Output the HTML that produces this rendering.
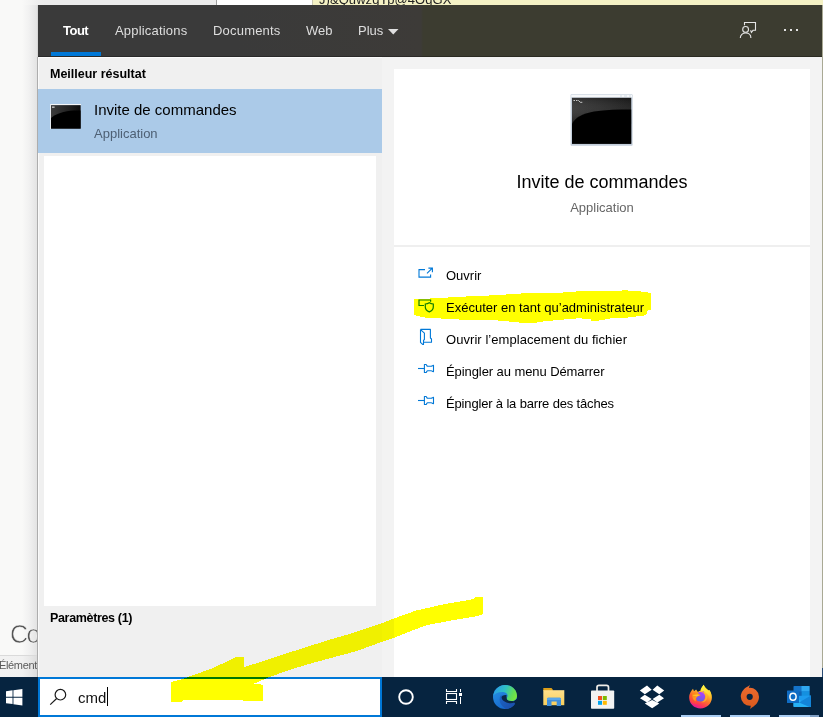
<!DOCTYPE html>
<html lang="fr">
<head>
<meta charset="utf-8">
<title>Recherche Windows - cmd</title>
<style>
*{box-sizing:border-box;margin:0;padding:0}
html,body{width:823px;height:717px;overflow:hidden;background:#f9f9f8}
body{position:relative;font-family:"Liberation Sans",sans-serif;font-size:13px;color:#000}
.abs{position:absolute}
/* background behind panel */
#bgtop{left:0;top:0;width:823px;height:6px;background:linear-gradient(90deg,#f9f9f8 0,#f9f9f8 22px,#efefef 36px,#ececec 44px,#ececec 216px)}
#bgtop .w{left:216px;top:0;width:96px;height:6px;background:#fff;border-left:1px solid #a0a0a0}
#bgtop .y{left:312px;top:0;width:511px;border-left:1px solid #c9c7b0;height:6px;background:#f4f1c4;overflow:hidden}
#bgtop .y span{position:absolute;left:6px;top:-8px;font-size:13px;line-height:15px;color:#222;letter-spacing:.06px;white-space:nowrap}
#bgleft{left:0;top:5px;width:38px;height:672px;background:linear-gradient(90deg,#f9f9f8 0,#f9f9f8 22px,#f1f1f1 29px,#e5e5e5 36px,#e2e2e2 37px,#efefef 37px,#efefef 38px)}
#co{left:10px;top:620px;font-size:25px;line-height:28px;color:#555;-webkit-text-stroke:.55px #f9f9f8;white-space:nowrap;width:27px;overflow:hidden;letter-spacing:-1.500px}
#elline{left:0;top:655px;width:38px;height:22px;background:linear-gradient(90deg,#f2f2f2 0,#f1f1f1 22px,#e9e9e9 29px,#dedede 36px,#dcdcdc 37px,#e9e9e9 37px,#e9e9e9 38px);border-top:1px solid #dadada}
#el{left:-1px;top:658px;font-size:11px;line-height:14px;color:#5a5a5a;white-space:nowrap;width:39px;overflow:hidden;letter-spacing:-.35px}
/* panel */
#panel{left:38px;top:5px;width:784px;height:672px;background:#f3f3f3}
#hdr{left:0;top:0;width:784px;height:52px;background:linear-gradient(90deg,#3a3a3a 0,#3a3a3a 200px,#3d3b38 383px,#3c3c30 385px,#3c3c30 784px)}
.tab{position:absolute;top:18px;font-size:13px;color:#dedede;white-space:nowrap;line-height:16px}
#tout{left:25px;font-weight:bold;color:#fff;letter-spacing:-.5px}
#uline{left:13px;top:47px;width:50px;height:4px;background:#0078d7}
#leftcol{left:0;top:52px;width:344px;height:620px;background:#f0f0f0}
#best{left:12px;top:9px;font-size:12.5px;font-weight:bold;line-height:16px;white-space:nowrap;color:#000}
#sel{left:0;top:32px;width:344px;height:64px;background:#abcae8}
#sel .t1{left:56px;top:11px;font-size:15px;line-height:20px;white-space:nowrap}
#sel .t2{left:56px;top:37px;font-size:13px;line-height:16px;color:#4e6074;white-space:nowrap}
#whitebox{left:6px;top:99px;width:332px;height:450px;background:#fff}
#params{left:12px;top:553px;letter-spacing:-.34px;font-size:12.5px;font-weight:bold;line-height:16px;white-space:nowrap}
#right{left:356px;top:64px;width:416px;height:608px;background:#fff}
#rtitle{left:0;top:102px;width:416px;text-align:center;font-size:18px;line-height:22px}
#rsub{left:0;top:131px;width:416px;text-align:center;font-size:13px;line-height:16px;color:#666}
#rdiv{left:0;top:176px;width:416px;height:2px;background:#efefef}
.act{position:absolute;left:52px;font-size:13px;line-height:16px;white-space:nowrap;color:#000}
.ico{position:absolute;overflow:visible}
/* taskbar */
#task{left:0;top:677px;width:823px;height:40px;background:#062440}
#sbox{left:38px;top:0;width:344px;height:40px;background:#fff;border:2px solid #0078d7}
#sbox .q{left:38px;top:9px;font-size:15px;line-height:20px;color:#111}
#caret{left:67px;top:8px;width:1px;height:19px;background:#000}
#hl{left:0;top:0;width:823px;height:717px;mix-blend-mode:multiply;pointer-events:none}
</style>
</head>
<body>
<div id="bgtop" class="abs"><div class="w abs"></div><div class="y abs"><span>J)&amp;QuwzgYp@4OqGX</span></div></div>
<div id="bgleft" class="abs"></div>
<div id="co" class="abs">Co</div>
<div id="elline" class="abs"></div>
<div id="el" class="abs">Élément</div>

<div class="abs" style="left:822px;top:5px;width:1px;height:663px;background:#a9a994"></div>
<div class="abs" style="left:822px;top:668px;width:1px;height:9px;background:#2a4c74"></div>
<div class="abs" style="left:37px;top:5px;width:1px;height:52px;background:#d6d6d6"></div>
<div class="abs" style="left:37px;top:57px;width:1px;height:620px;background:#adadad"></div>
<div id="panel" class="abs">
  <div id="hdr" class="abs">
    <div class="tab" id="tout">Tout</div>
    <div class="tab" style="left:77px;letter-spacing:.19px">Applications</div>
    <div class="tab" style="left:175px;letter-spacing:.2px">Documents</div>
    <div class="tab" style="left:268px">Web</div>
    <div class="tab" style="left:320px">Plus</div>
    <svg class="ico" style="left:350px;top:23.500px" width="10.500" height="5.500" viewBox="0 0 11 6" preserveAspectRatio="none"><path d="M0 0h11L5.500 6z" fill="#e0e0e0"/></svg>
    <div id="uline" class="abs"></div>
    <!-- feedback icon -->
    <svg class="ico" style="left:701px;top:16px" width="18" height="18" viewBox="0 0 18 18" fill="none" stroke="#e6e6e6" stroke-width="1.100">
      <path d="M5.500 4.200V1.500H16.500V9.300H14L12.400 11.400 11.600 9.300"/>
      <circle cx="6.600" cy="8.400" r="2.900"/>
      <path d="M1.300 17C1.300 13.800 3.700 12 6.600 12S11.900 13.800 11.900 17"/>
    </svg>
    <div class="abs" style="left:746px;top:24px;width:2px;height:2px;background:#e2e2e2"></div>
    <div class="abs" style="left:752px;top:24px;width:2px;height:2px;background:#e2e2e2"></div>
    <div class="abs" style="left:758px;top:24px;width:2px;height:2px;background:#e2e2e2"></div>
  </div>

  <div class="abs" style="left:0;top:51px;width:784px;height:1px;background:rgba(0,0,0,.28)"></div>
  <div id="leftcol" class="abs">
    <div class="abs" style="left:0;top:0;width:344px;height:1px;background:#fbfbfb"></div>
    <div class="abs" style="left:0;top:0;width:1px;height:620px;background:#fafafa"></div>
    <div id="best" class="abs">Meilleur résultat</div>
    <div id="sel" class="abs">
      <svg class="ico" style="left:12px;top:15px" width="32" height="26" viewBox="0 0 32 26">
        <defs><linearGradient id="g1" x1="0" y1="0" x2="1" y2="0"><stop offset="0" stop-color="#3c3c3c"/><stop offset=".6" stop-color="#222"/><stop offset="1" stop-color="#0c0c0c"/></linearGradient></defs>
        <rect x="0" y="0" width="31" height="25" fill="#7d8fa3"/>
        <rect x="0" y="0" width="31" height="1.200" fill="#f4f6f8"/>
        <rect x="0" y="0" width="1" height="25" fill="#e6ebf0"/>
        <rect x="1" y="1.200" width="29.500" height="23.200" fill="url(#g1)"/>
        <path d="M1 14C5 10.500 11 8 17 7.200 22 6.600 26 6.600 30.500 6.600V24.400H1z" fill="#000"/>
        <rect x="2" y="2.500" width="2.600" height="1.300" fill="#d0d0d0"/>
      </svg>
      <div class="t1 abs">Invite de commandes</div>
      <div class="t2 abs">Application</div>
    </div>
    <div id="whitebox" class="abs"></div>
    <div id="params" class="abs">Paramètres (1)</div>
  </div>

  <div id="right" class="abs">
    <svg class="ico" style="left:176px;top:25px" width="64" height="53" viewBox="0 0 64 53">
      <defs><linearGradient id="g2" x1="0" y1="0" x2="1" y2="0"><stop offset="0" stop-color="#333"/><stop offset=".5" stop-color="#262626"/><stop offset="1" stop-color="#161616"/></linearGradient>
      <linearGradient id="g3" x1="0" y1="0" x2="0" y2="1"><stop offset="0" stop-color="#fff" stop-opacity="0"/><stop offset="1" stop-color="#000" stop-opacity=".35"/></linearGradient></defs>
      <rect x=".6" y=".2" width="62" height="51.600" rx=".8" fill="#c3cedb"/>
      <rect x="1.200" y=".8" width="60.800" height="2.600" fill="#f6f8fa"/>
      <rect x="2" y="3.800" width="59.200" height="46" fill="url(#g2)"/>
      <rect x="2" y="3.800" width="59.200" height="26" fill="url(#g3)"/>
      <path d="M2 30C5 23.500 12 20 24 17.500 36 15.800 48 15.500 61.200 15.500V49.800H2z" fill="#000"/>
      <path d="M3.500 6.500h1.500M6 6.500h1.500M8.300 6.300l2 2h2" stroke="#d8d8d8" stroke-width=".9" fill="none"/>
      <path d="M50 2h2M54 2h3M59 2h2" stroke="#c9d3de" stroke-width=".8"/>
    </svg>
    <div id="rtitle" class="abs">Invite de commandes</div>
    <div id="rsub" class="abs">Application</div>
    <div id="rdiv" class="abs"></div>

    <!-- Ouvrir -->
    <svg class="ico" style="left:23px;top:198px" width="16" height="12" viewBox="0 0 16 12" fill="none" stroke="#0078d7" stroke-width="1.100">
      <path d="M8 2.600H2V10.100H13.600V7.500"/><path d="M10 6.400L15.300 1.100M11.400 1.100H15.400V5.200"/>
    </svg>
    <div class="act" style="top:199px">Ouvrir</div>
    <!-- Executer -->
    <svg class="ico" style="left:23px;top:230px" width="18" height="14" viewBox="0 0 18 14" fill="none" stroke-width="1.200">
      <path d="M7 6.500H2V1H13.600V2.800" stroke="#107c10"/>
      <path d="M12.300 3.800c1.300.9 2.600 1.200 4 1.200v3c0 2.400-1.700 4-4 4.900-2.300-.9-4-2.500-4-4.900V5c1.400 0 2.700-.3 4-1.200z" stroke="#107c10"/>
    </svg>
    <div class="act" style="top:231px">Exécuter en tant qu’administrateur</div>
    <!-- Ouvrir emplacement -->
    <svg class="ico" style="left:25px;top:259px" width="14" height="18" viewBox="0 0 14 18" fill="none" stroke="#0078d7" stroke-width="1.100" stroke-linejoin="round">
      <path d="M1.500 1.400H11.400V10L12.500 11V14.200H4.500"/><path d="M1.500 1.400V14.400L3.600 16.400H4.500V12.400L5.400 11.500V5.100L1.500 1.700"/>
    </svg>
    <div class="act" style="top:263px;letter-spacing:.06px">Ouvrir l’emplacement du fichier</div>
    <!-- pin -->
    <svg class="ico" style="left:24px;top:295px" width="17" height="9" viewBox="0 0 17 9" fill="none" stroke="#0078d7" stroke-width="1.100" stroke-linejoin="round">
      <path d="M0 4.500H6.400"/><path d="M6.400.500H8.200C8.800 1.300 9 2.300 9.600 2.300H13.200C14 2.300 14.400 1.600 15 1.400H15.500V7.600H15C14.400 7.400 14 6.700 13.200 6.700H9.600C9 6.700 8.800 7.700 8.200 8.500H6.400z"/>
    </svg>
    <div class="act" style="top:295px;letter-spacing:-.08px">Épingler au menu Démarrer</div>
    <svg class="ico" style="left:24px;top:327px" width="17" height="9" viewBox="0 0 17 9" fill="none" stroke="#0078d7" stroke-width="1.100" stroke-linejoin="round">
      <path d="M0 4.500H6.400"/><path d="M6.400.500H8.200C8.800 1.300 9 2.300 9.600 2.300H13.200C14 2.300 14.400 1.600 15 1.400H15.500V7.600H15C14.400 7.400 14 6.700 13.200 6.700H9.600C9 6.700 8.800 7.700 8.200 8.500H6.400z"/>
    </svg>
    <div class="act" style="top:327px;letter-spacing:-.16px">Épingler à la barre des tâches</div>
  </div>
</div>

<div id="task" class="abs">
  <!-- windows logo -->
  <svg class="ico" style="left:5.800px;top:11.900px" width="16.400" height="16.500" viewBox="0 0 17 17" preserveAspectRatio="none" fill="#fff">
    <path d="M0 2.300L6.800 1.400V8H0zM7.700 1.300L17 0V8H7.700zM0 8.900H6.800V15.500L0 14.600zM7.700 8.900H17V17L7.700 15.700z"/>
  </svg>
  <div id="sbox" class="abs">
    <svg class="ico" style="left:9px;top:9px" width="18" height="18" viewBox="0 0 18 18" fill="none" stroke="#1a1a1a" stroke-width="1.200">
      <circle cx="11.400" cy="6.700" r="5.300"/><path d="M7.650 10.450L1.200 16.600"/>
    </svg>
    <div class="q abs">cmd</div>
    <div id="caret" class="abs"></div>
  </div>
  <!-- cortana -->
  <svg class="ico" style="left:398px;top:12px" width="16" height="16" viewBox="0 0 16 16" fill="none" stroke="#fff" stroke-width="1.900"><circle cx="8" cy="8" r="6.800"/></svg>
  <!-- task view -->
  <svg class="ico" style="left:445px;top:11px" width="18" height="17" viewBox="0 0 18 17" fill="none" stroke="#fff" stroke-width="1.100">
    <path d="M1.500 1V3.500H11.500V1M1.500 16V13.500H11.500V16"/><rect x="1.500" y="5.500" width="10" height="6"/><path d="M15.500 1V4M15.500 9V16" stroke-width="1"/><rect x="14" y="5" width="3" height="3" fill="#fff" stroke="none"/>
  </svg>
  <!-- edge -->
  <svg class="ico" style="left:493px;top:8px" width="24" height="24" viewBox="0 0 24 24">
    <defs>
      <linearGradient id="e1" x1="0" y1=".3" x2="1" y2=".6"><stop offset="0" stop-color="#2a9ce8"/><stop offset=".45" stop-color="#2fc0c4"/><stop offset=".8" stop-color="#5fdc5c"/><stop offset="1" stop-color="#7ae63c"/></linearGradient>
      <linearGradient id="e2" x1="0" y1="0" x2=".6" y2="1"><stop offset="0" stop-color="#2a98e6"/><stop offset="1" stop-color="#1464cc"/></linearGradient>
      <linearGradient id="e3" x1="0" y1="0" x2="1" y2="1"><stop offset="0" stop-color="#1c66c8"/><stop offset="1" stop-color="#1a4aa6"/></linearGradient>
    </defs>
    <circle cx="12" cy="12" r="12" fill="url(#e2)"/>
    <path d="M7.600 10.500C6 13 6.300 17 8.500 20c1.300 1.800 3 3.200 4.500 4 4.500-.3 8.700-3.300 10-7.600-2 1.300-5 1.600-7.500.6-2.700-1-5-3.500-5.300-6.500z" fill="url(#e3)"/>
    <path d="M8.600 12.800c-.2-1.700 1.800-3.200 5-2.800-.5 1.800.2 4 1.600 5.200l6.800 1.400-.5 1c-2.500 1-5.500 1-8-.1-2.700-1-4.700-2.700-4.900-4.700z" fill="#0a2748"/>
    <path d="M24.500 13.500L20.500 16.300 22.300 19 24.500 18z" fill="#062440"/>
    <path d="M0.300 10.500C1.500 4.500 6.300 0 12 0c7 0 12 5 12 11 0 3-2.400 5-5.400 5-3 0-4.800-1.200-4.800-2.500 0-1 .8-1.500.8-2.900C14.600 8.500 12.200 7 9.200 7 5.200 7 1.800 8.800 0.300 10.500z" fill="url(#e1)"/>
  </svg>
  <!-- explorer -->
  <svg class="ico" style="left:543px;top:10px" width="22" height="20" viewBox="0 0 22 20">
    <defs><linearGradient id="x1" x1="0" y1="0" x2="0" y2="1"><stop offset="0" stop-color="#ffe08c"/><stop offset="1" stop-color="#f8cf5c"/></linearGradient></defs>
    <path d="M.3 1.100h8.200l1.200 1.500V4H.3z" fill="#dea01a"/>
    <rect x=".3" y="3.200" width="21" height="15" fill="url(#x1)"/>
    <path d="M4 12.200c0-.9.600-1.500 1.500-1.500h11c.9 0 1.500.600 1.500 1.500v6.900h-4.300v-4.500H8.500v4.500H4z" fill="#3f8fdc"/>
    <path d="M4 12.200c0-.9.600-1.500 1.500-1.500h11c.9 0 1.500.600 1.500 1.500v.8H4z" fill="#57a6ec"/>
  </svg>
  <!-- store -->
  <svg class="ico" style="left:591px;top:7px" width="24" height="25" viewBox="0 0 24 25">
    <path d="M6 7V3.300C6 2.200 6.800 1.300 8 1.300h7.500c1.200 0 2 .9 2 2V7" fill="none" stroke="#f0ede8" stroke-width="1.700"/>
    <rect x="0" y="6.400" width="23.200" height="18.400" rx=".8" fill="#f3f3f3"/>
    <rect x="7" y="12" width="4" height="4" fill="#f25022"/><rect x="11.800" y="12" width="4" height="4" fill="#7fba00"/>
    <rect x="7" y="16.800" width="4" height="4" fill="#00a4ef"/><rect x="11.800" y="16.800" width="4" height="4" fill="#ffb900"/>
  </svg>
  <!-- dropbox -->
  <svg class="ico" style="left:640px;top:8px" width="25" height="24" viewBox="0 0 25 24" fill="#fff">
    <path d="M-.2 5.400L7 .600 11.700 4.700 4.800 9.200zM12.600 4.700L17.300 .600 24.200 5.400 19.300 9.200zM0 13.200L4.800 9.700 11.700 13.900 7 17.500zM12.600 13.900L19.300 9.700 24 13.200 17.300 17.500zM4.800 18.400L12.150 15 19.300 18.400 12.150 23.300z"/>
  </svg>
  <!-- firefox -->
  <svg class="ico" style="left:689px;top:8px" width="24" height="24" viewBox="0 0 24 24">
    <defs>
      <linearGradient id="f1" x1=".8" y1=".05" x2=".35" y2="1"><stop offset="0" stop-color="#fff13c"/><stop offset=".3" stop-color="#ffbe2c"/><stop offset=".55" stop-color="#ff7a2a"/><stop offset=".8" stop-color="#ff3a50"/><stop offset="1" stop-color="#e4189c"/></linearGradient>
      <linearGradient id="f2" x1=".6" y1="0" x2=".4" y2="1"><stop offset="0" stop-color="#b040ff"/><stop offset=".5" stop-color="#8a50f0"/><stop offset="1" stop-color="#5a68e0"/></linearGradient>
      <linearGradient id="f3" x1="0" y1="0" x2="1" y2="1"><stop offset="0" stop-color="#ff7a1e"/><stop offset=".5" stop-color="#ff9c1e"/><stop offset="1" stop-color="#ff5a2a"/></linearGradient>
      <linearGradient id="f4" x1=".3" y1="0" x2=".7" y2="1"><stop offset="0" stop-color="#fff444"/><stop offset=".6" stop-color="#ffd52e"/><stop offset="1" stop-color="#ffa024" stop-opacity=".2"/></linearGradient>
    </defs>
    <path d="M4 3.800L5 6.300 7.100 4.400 8.900 6.900C9.800 6.200 10.700 5.900 11.400 5.800 11.600 4.300 12.200 2.800 14.700-.200 15.500 1.800 16.800 3.300 18.300 4.600L19.600 5.600 20.500 5.200C21.700 7 22.800 9.800 22.800 12.600 22.800 18.800 17.800 23.500 11.500 23.500 5.200 23.500.200 18.800.200 12.800.200 10.500.800 8.300 1.800 6.800 2.400 5.800 3.200 4.700 4 3.800z" fill="url(#f1)"/>
    <path d="M1.200 7.800C0 11.500.500 15 3 18.200L8 19 5 11z" fill="#ff5a2a" opacity=".55"/>
    <circle cx="11.400" cy="11.800" r="4.800" fill="url(#f2)"/>
    <path d="M2.800 8.300C4.500 7.300 7 7.200 8.800 8.100L10.400 9.300 11.700 10.300C10.500 11 9 11 8 12 6.800 13.200 6.500 15 7.400 16.600 5 16 3 13.500 2.800 8.300z" fill="url(#f3)"/>
    <path d="M3.700 9.900L8.500 9.600 10.500 10.400 8 11.200 4.500 10.800z" fill="#ffc62a"/>
    <path d="M13.600 6.600c.6-1 2-.9 2.600-.6-1 .3-1.400 1-1.300 1.800z" fill="#b040ff"/>
    <path d="M11.800 5.800C12 4 13 2.300 14.700-.2 15.500 1.800 16.800 3.300 18.300 4.600L19.600 5.600 20.500 5.200C21.700 7 22.800 9.800 22.800 12.600 22.800 15 22 17 21 18.500 21.500 15 21 11 18 8.500 16.500 7.200 14.500 6 11.800 5.800z" fill="url(#f4)"/>
    <path d="M16.200 8.500C17.700 12 16 16.500 12 17.200 16 18.200 19.500 14 17.800 9.800z" fill="#ffb42a" opacity=".8"/>
  </svg>
  <!-- origin -->
  <svg class="ico" style="left:738px;top:7px" width="24" height="26" viewBox="-12 -13 24 26">
    <defs><linearGradient id="o1" x1="0" y1="0" x2="0" y2="1"><stop offset="0" stop-color="#ee6c30"/><stop offset="1" stop-color="#d8591c"/></linearGradient></defs>
    <path transform="translate(-.3 -.2)" d="M.200-11.900L-.900-8.900A9.100 9.100 0 0 1 9.300 0C9.300 4 7 7.500 4.200 9.400 3 10.300 1.500 11.200.450 12.200L1.100 9A9.100 9.100 0 0 1-8.900 0C-8.900-4-6.500-7.500-3.300-9.600-2-10.400-.800-11 .200-11.900z" fill="url(#o1)"/>
    <circle cx="-.3" cy="-.2" r="3.100" fill="#062440"/>
  </svg>
  <!-- outlook -->
  <svg class="ico" style="left:787px;top:8px" width="25" height="23" viewBox="0 0 25 23">
    <rect x="6.500" y="1" width="16" height="15" rx=".8" fill="#1473c9"/>
    <rect x="14.500" y="1" width="8" height="5.500" fill="#2fa8f0"/>
    <rect x="14.500" y="6.500" width="8" height="5" fill="#1490df"/>
    <rect x="6.500" y="6.500" width="8" height="5" fill="#0f64b5"/>
    <path d="M6.500 11l17.500-0.500V21c0 .6-.5 1-1 1H7.500c-.6 0-1-.4-1-1z" fill="#1d9bee"/>
    <path d="M6.500 11.500L24 21.500c-.2.300-.5.500-1 .5H7.500c-.6 0-1-.4-1-1z" fill="#27b1f5"/>
    <path d="M24 10.500L12 17.500 22.500 22c.8 0 1.500-.5 1.500-1z" fill="#1384d8"/>
    <rect x="0" y="5.500" width="12" height="12.500" rx=".6" fill="#0f6cc4"/>
    <ellipse cx="6" cy="11.700" rx="3.100" ry="3.500" fill="none" stroke="#fff" stroke-width="1.500"/>
  </svg>
  <!-- running indicators -->
  <div class="abs" style="left:681px;top:38px;width:40px;height:2px;background:#a9cdf3"></div>
  <div class="abs" style="left:730px;top:38px;width:40px;height:2px;background:#a9cdf3"></div>
  <div class="abs" style="left:779px;top:38px;width:31px;height:2px;background:#a9cdf3"></div>
  <div class="abs" style="left:810px;top:38px;width:9px;height:2px;background:#7f9fc4"></div>
</div>

<!-- yellow highlighter marks -->
<svg id="hl" class="abs" width="823" height="717" viewBox="0 0 823 717">
  <polygon fill="#ffff00" shape-rendering="crispEdges" points="414,299.500 431.900,298.400 468.200,296.400 493.500,295.300 535,292.600 561.600,292.600 577.400,291.400 609,291.400 624.800,290.300 637.400,291 650.900,293 650.900,310 646.900,310.800 646.900,314 643.700,315.500 624.800,317.900 605.800,318.700 604.200,320.300 591.600,320.800 590,318.700 577.400,318.400 545.800,321.100 536.300,322.700 521.900,322.900 515.600,322.100 493.500,320.100 471.400,320.500 452.400,319 427.100,317.900 420.800,316.600 414,315"/>
  <polygon fill="#ffff00" shape-rendering="crispEdges" points="483,596.800 483,613.800 478.800,615.800 454,620 427.100,625.100 412.600,630.300 394,637.900 379.600,642.700 356.900,651 334.100,657.100 313.100,662.800 291.200,669.400 269.400,677 254,683.600 262.800,684.700 262.800,701.100 225.600,700 183,700.400 181.900,702.200 171.400,702.200 171.400,681.800 181.900,679.200 212.500,668.300 235.500,657.300 244.200,657.300 244.200,667.200 291.200,651.900 330,639.600 354.800,632.400 379.600,624.100 398.200,616.900 415.700,610.700 442.600,604.500 472.600,599.300 475.700,596.800"/>
</svg>
</body>
</html>
